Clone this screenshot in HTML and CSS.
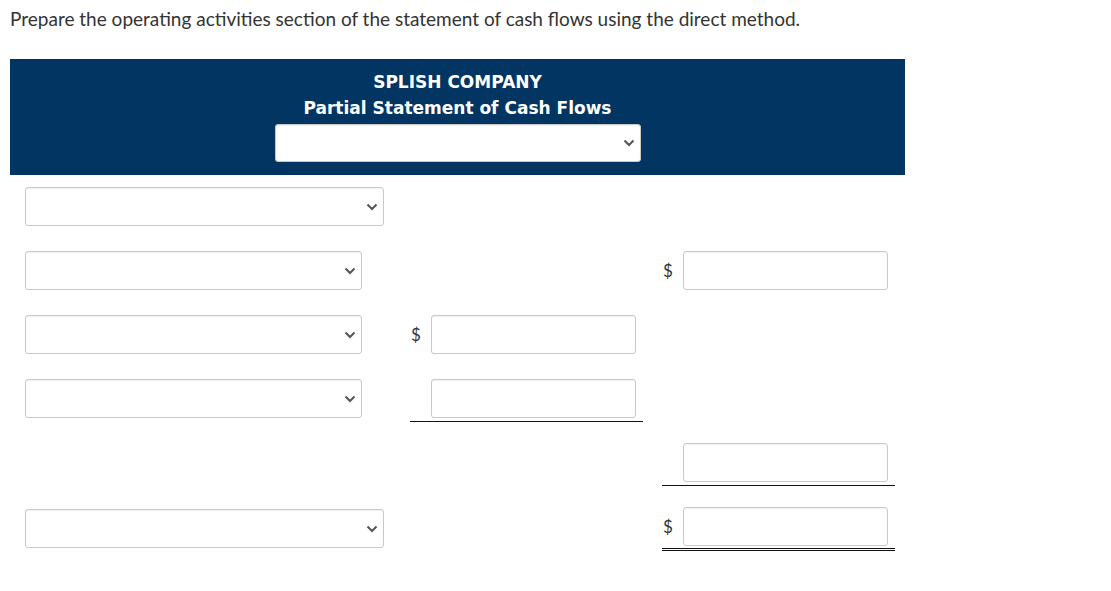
FILE: index.html
```html
<!DOCTYPE html>
<html lang="en">
<head>
<meta charset="utf-8">
<title>Partial Statement of Cash Flows</title>
<link rel="stylesheet" href="styles.css">
</head>
<body>
<p class="prompt">Prepare the operating activities section of the statement of cash flows using the direct method.</p>
<div class="sheet">
  <div class="sheet-head">
    <div class="title">SPLISH COMPANY</div>
    <div class="title">Partial Statement of Cash Flows</div>
    <select class="sel sel-head"><option></option></select>
  </div>
  <div class="sheet-body">
    <div class="row">
      <div class="c1"><select class="sel sel-wide"><option></option></select></div>
      <div class="cell"></div>
      <div class="cell"></div>
    </div>
    <div class="row">
      <div class="c1"><select class="sel sel-narrow"><option></option></select></div>
      <div class="cell"></div>
      <div class="cell"><span class="cur">$</span><input class="amt" type="text"></div>
    </div>
    <div class="row">
      <div class="c1"><select class="sel sel-narrow"><option></option></select></div>
      <div class="cell"><span class="cur">$</span><input class="amt" type="text"></div>
      <div class="cell"></div>
    </div>
    <div class="row">
      <div class="c1"><select class="sel sel-narrow"><option></option></select></div>
      <div class="cell cell-line"><span class="cur"></span><input class="amt" type="text"></div>
      <div class="cell"></div>
    </div>
    <div class="row">
      <div class="c1"></div>
      <div class="cell"></div>
      <div class="cell cell-line"><span class="cur"></span><input class="amt" type="text"></div>
    </div>
    <div class="row row-last">
      <div class="c1 c1-low"><select class="sel sel-wide"><option></option></select></div>
      <div class="cell"></div>
      <div class="cell cell-double"><span class="cur">$</span><input class="amt" type="text"></div>
    </div>
  </div>
</div>
</body>
</html>
```

FILE: styles.css
```css
html, body {
  margin: 0;
  padding: 0;
  background: #ffffff;
}

body {
  font-family: Lato, "Open Sans", "Liberation Sans", sans-serif;
  color: #333333;
}

.prompt {
  margin: 0;
  padding: 6px 10px 0 10px;
  font-size: 19px;
  line-height: 26px;
  color: #333333;
}

.sheet {
  margin: 27px 0 0 10px;
  width: 895px;
}

.sheet-head {
  background: #033563;
  padding: 10px 0 13px 0;
  display: flex;
  flex-direction: column;
  align-items: center;
}

.title {
  color: #ffffff;
  font-family: "DejaVu Sans", Verdana, sans-serif;
  font-weight: 700;
  font-size: 17px;
  line-height: 26px;
}

.sel {
  -webkit-appearance: none;
  appearance: none;
  box-sizing: border-box;
  height: 39px;
  margin: 0;
  border: 1px solid #c9c9c9;
  border-radius: 3px;
  box-shadow: inset 0 1px 1px rgba(0, 0, 0, 0.06);
  background-color: #ffffff;
  background-image: url("data:image/svg+xml;utf8,<svg xmlns='http://www.w3.org/2000/svg' width='12' height='8' viewBox='0 0 12 8'><path d='M1.5 1.5 L6 6 L10.5 1.5' fill='none' stroke='%23555555' stroke-width='2'/></svg>");
  background-repeat: no-repeat;
  background-position: right 5px center;
  background-size: 12px 8px;
  font-family: Lato, "Liberation Sans", sans-serif;
  font-size: 15px;
  color: #333333;
  padding: 0 24px 0 8px;
}

.sel-head {
  margin-top: 3px;
  width: 366px;
  height: 38px;
}

.sel-wide {
  width: 359px;
}

.sel-narrow {
  width: 337px;
}

.sheet-body {
  padding: 12px 0 0 15px;
}

.row {
  display: grid;
  grid-template-columns: 385px 252px 233px;
  height: 64px;
  align-items: start;
}

.c1-low {
  padding-top: 2px;
}

.cell {
  width: 233px;
  display: flex;
  align-items: center;
  padding-bottom: 3px;
}

.cell-line {
  border-bottom: 1px solid #111111;
}

.cell-double {
  padding-bottom: 2px;
  border-bottom: 3px double #111111;
}

.cur {
  box-sizing: border-box;
  width: 21px;
  padding-left: 1px;
  font-size: 17px;
  color: #333333;
}

.amt {
  box-sizing: border-box;
  width: 205px;
  height: 39px;
  margin: 0;
  border: 1px solid #c9c9c9;
  border-radius: 3px;
  box-shadow: inset 0 1px 1px rgba(0, 0, 0, 0.06);
  background: #ffffff;
  padding: 0 8px;
  font-family: Lato, "Liberation Sans", sans-serif;
  font-size: 15px;
}
```
